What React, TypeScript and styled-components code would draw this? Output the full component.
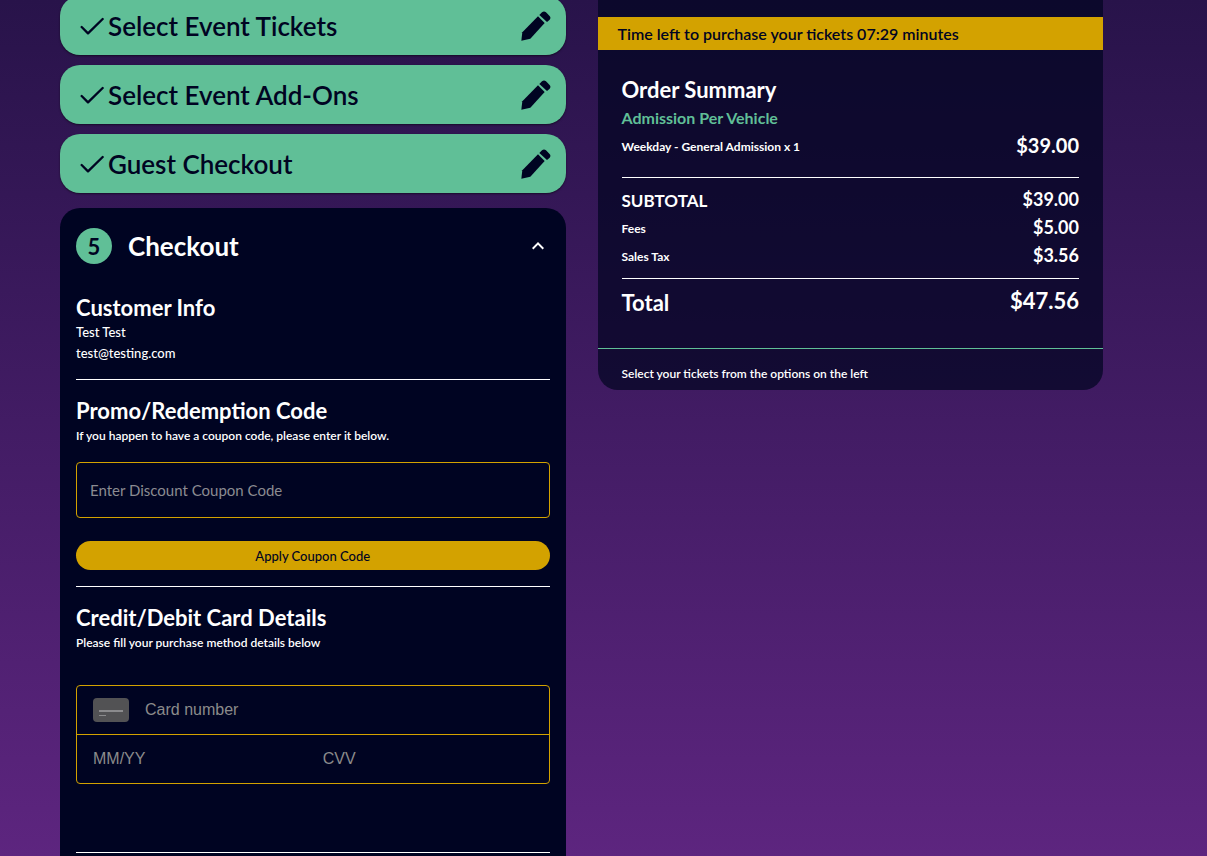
import React from "react";
import styled, { createGlobalStyle } from "styled-components";

const navy = "#000422";
const green = "#60bf97";
const gold = "#d3a200";

const GlobalStyle = createGlobalStyle`
  *, *::before, *::after { box-sizing: border-box; }
  body {
    margin: 0;
    color: #fff;
    font-family: Lato, "Liberation Sans", sans-serif;
    background: linear-gradient(#28134a, #5d257f) no-repeat #5d257f;
  }
  h1, h2, h3, p, dl, dt, dd { margin: 0; }
`;

const Page = styled.main`
  display: grid;
  grid-template-columns: 1fr 1fr;
  gap: 32px;
  min-height: 100vh;
  padding: 0 104px 0 60px;
`;

const Steps = styled.div`
  display: flex;
  flex-direction: column;
  gap: 10px;
  margin-top: -4px;
`;

const DoneStep = styled.button`
  display: flex;
  align-items: center;
  gap: 4px;
  height: 59px;
  padding: 0 15px 0 20px;
  border: 0;
  border-radius: 20px;
  background: ${green};
  color: ${navy};
  font: 600 26px/32px Lato, sans-serif;
  text-align: left;
  cursor: pointer;
  box-shadow: 0 1px 2px rgba(0, 0, 0, 0.5);
`;

const StepName = styled.span`
  flex: 1;
`;

const CheckoutPanel = styled.section`
  flex: 1;
  margin-top: 5px;
  padding: 20px 16px 3px;
  border-radius: 20px 20px 0 0;
  background: ${navy};
`;

const PanelHeader = styled.header`
  display: flex;
  align-items: center;
  gap: 16px;
  margin-bottom: 30px;
`;

const StepNumber = styled.span`
  display: grid;
  place-items: center;
  width: 36px;
  height: 36px;
  border-radius: 50%;
  background: ${green};
  color: ${navy};
  font-size: 22px;
  font-weight: 700;
`;

const PanelTitle = styled.h1`
  flex: 1;
  font-size: 26px;
  line-height: 32px;
`;

const CollapseButton = styled.button`
  display: flex;
  padding: 0;
  border: 0;
  background: none;
  color: #fff;
  cursor: pointer;
`;

const Heading = styled.h2`
  font-size: 22px;
  line-height: 28px;
  white-space: nowrap;
`;

const Copy = styled.p<{ $small?: boolean }>`
  font-size: ${(p) => (p.$small ? 12 : 13)}px;
  font-weight: ${(p) => (p.$small ? 600 : 500)};
  line-height: 21px;
`;

const Divider = styled.hr<{ $above: number; $below: number }>`
  height: 1px;
  margin: ${(p) => p.$above}px 0 ${(p) => p.$below}px;
  border: 0;
  background: #fff;
`;

const CouponInput = styled.input`
  display: block;
  width: 100%;
  height: 56px;
  margin: 16px 0 23px;
  padding: 0 13px;
  border: 1px solid ${gold};
  border-radius: 4px;
  background: transparent;
  color: #fff;
  font: 400 15px Lato, sans-serif;
  &::placeholder { color: #8b8b91; opacity: 1; }
`;

const ApplyButton = styled.button`
  display: block;
  width: 100%;
  height: 29px;
  border: 0;
  border-radius: 15px;
  background: ${gold};
  color: ${navy};
  font: 500 13px Lato, sans-serif;
  cursor: pointer;
`;

const CardFields = styled.div`
  margin-top: 32px;
  border: 1px solid ${gold};
  border-radius: 4px;
`;

const CardRow = styled.div`
  display: flex;
  align-items: center;
  gap: 20px;
  height: 48px;
  padding: 0 16px;
  & + & {
    height: 49px;
    border-top: 1px solid ${gold};
  }
`;

const CardNumber = styled.label`
  display: flex;
  flex: 1;
  align-items: center;
  gap: 16px;
`;

const CardInput = styled.input`
  flex: 1;
  min-width: 0;
  padding: 0;
  border: 0;
  background: transparent;
  color: #fff;
  font: 400 16px "Liberation Sans", sans-serif;
  &::placeholder { color: #8b8b8b; opacity: 1; }
`;

const Summary = styled.aside`
  align-self: start;
  padding-top: 17px;
  border-radius: 0 0 20px 20px;
  background: rgba(0, 4, 32, 0.7);
`;

const Timer = styled.p`
  padding: 0 20px;
  background: ${gold};
  color: ${navy};
  font-size: 16px;
  font-weight: 600;
  line-height: 33px;
`;

const SummaryBody = styled.div`
  padding: 26px 24px 30px;
`;

const TicketGroup = styled.h3`
  color: ${green};
  font-size: 16px;
  line-height: 28px;
`;

const Line = styled.dl<{ $total?: boolean }>`
  display: flex;
  align-items: center;
  justify-content: space-between;
  height: ${(p) => (p.$total ? 32 : 28)}px;
`;

const LineLabel = styled.dt<{ $size: number }>`
  font-size: ${(p) => p.$size}px;
  font-weight: 700;
`;

const LineAmount = styled.dd<{ $size: number }>`
  font-size: ${(p) => p.$size}px;
  font-weight: 700;
  line-height: 26px;
  padding-bottom: 2px;
`;

const SummaryNote = styled(Copy)`
  padding: 14px 24px 6px;
  border-top: 1px solid ${green};
`;

const CheckIcon = () => (
  <svg width="24" height="20" viewBox="0 0 72 60" fill="none" stroke="currentColor" strokeWidth="7" strokeLinecap="round" strokeLinejoin="round" aria-hidden="true">
    <path d="M5 33 24 52 68 9" />
  </svg>
);

const PencilIcon = () => (
  <svg width="30" height="30" viewBox="0 0 90 90" fill="currentColor" aria-hidden="true">
    <path d="M1 89 4 64 51 16 71 36 28 83Z" />
    <path d="M55 12 63 4Q69-1 75 4L85 14Q91 20 86 26L78 33Z" />
  </svg>
);

const ChevronUp = () => (
  <svg width="24" height="24" viewBox="0 0 24 24" fill="currentColor" aria-hidden="true">
    <path d="m12 8-6 6 1.41 1.41L12 10.83l4.59 4.58L18 14z" />
  </svg>
);

const CardGlyph = () => (
  <svg width="36" height="24" viewBox="0 0 36 24" aria-hidden="true">
    <rect width="36" height="24" rx="4" fill="#525254" />
    <path d="M6 12h24v2H6z" fill="#8b8b8d" />
    <path d="M6 17h7v1H6z" fill="#8b8b8d" />
  </svg>
);

const doneSteps = ["Select Event Tickets", "Select Event Add-Ons", "Guest Checkout"];

export default function App() {
  return (
    <>
      <GlobalStyle />
      <Page>
        <Steps>
          {doneSteps.map((name) => (
            <DoneStep key={name} type="button">
              <CheckIcon />
              <StepName>{name}</StepName>
              <PencilIcon />
            </DoneStep>
          ))}
          <CheckoutPanel>
            <PanelHeader>
              <StepNumber>5</StepNumber>
              <PanelTitle>Checkout</PanelTitle>
              <CollapseButton type="button" aria-label="Collapse checkout">
                <ChevronUp />
              </CollapseButton>
            </PanelHeader>

            <Heading>Customer Info</Heading>
            <Copy>Test Test</Copy>
            <Copy>test@testing.com</Copy>
            <Divider $above={15} $below={17} />

            <Heading>Promo/Redemption Code</Heading>
            <Copy $small>If you happen to have a coupon code, please enter it below.</Copy>
            <CouponInput aria-label="Discount coupon code" placeholder="Enter Discount Coupon Code" />
            <ApplyButton type="button">Apply Coupon Code</ApplyButton>
            <Divider $above={16} $below={17} />

            <Heading>Credit/Debit Card Details</Heading>
            <Copy $small>Please fill your purchase method details below</Copy>
            <CardFields>
              <CardRow>
                <CardNumber>
                  <CardGlyph />
                  <CardInput aria-label="Card number" placeholder="Card number" />
                </CardNumber>
              </CardRow>
              <CardRow>
                <CardInput aria-label="Expiry date" placeholder="MM/YY" />
                <CardInput aria-label="CVV" placeholder="CVV" />
              </CardRow>
            </CardFields>
            <Divider $above={68} $below={0} />
          </CheckoutPanel>
        </Steps>

        <Summary>
          <Timer>Time left to purchase your tickets 07:29 minutes</Timer>
          <SummaryBody>
            <Heading>Order Summary</Heading>
            <TicketGroup>Admission Per Vehicle</TicketGroup>
            <Line>
              <LineLabel $size={12}>Weekday - General Admission x 1</LineLabel>
              <LineAmount $size={20}>$39.00</LineAmount>
            </Line>
            <Divider $above={17} $below={8} />
            <Line>
              <LineLabel $size={17}>SUBTOTAL</LineLabel>
              <LineAmount $size={18}>$39.00</LineAmount>
            </Line>
            <Line>
              <LineLabel $size={12}>Fees</LineLabel>
              <LineAmount $size={18}>$5.00</LineAmount>
            </Line>
            <Line>
              <LineLabel $size={12}>Sales Tax</LineLabel>
              <LineAmount $size={18}>$3.56</LineAmount>
            </Line>
            <Divider $above={8} $below={7} />
            <Line $total>
              <LineLabel $size={22}>Total</LineLabel>
              <LineAmount $size={22}>$47.56</LineAmount>
            </Line>
          </SummaryBody>
          <SummaryNote $small>Select your tickets from the options on the left</SummaryNote>
        </Summary>
      </Page>
    </>
  );
}
